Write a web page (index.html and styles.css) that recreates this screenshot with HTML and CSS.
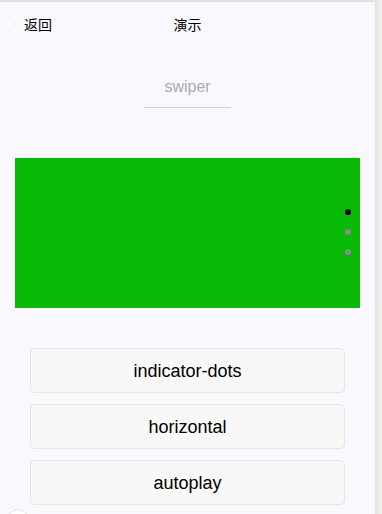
FILE: index.html
```html
<!DOCTYPE html>
<html lang="zh">
<head>
<meta charset="utf-8">
<title>演示</title>
<link rel="stylesheet" href="styles.css">
</head>
<body>
<div class="page">
  <header class="nav">
    <div class="nav-left">
      <svg class="chev" width="10" height="16" viewBox="0 0 10 16"><polyline points="8,1.5 2,8 8,14.5" fill="none" stroke="#ffffff" stroke-width="1.4"/></svg>
      <span class="back-text">返回</span>
    </div>
    <div class="nav-title">演示</div>
    <div class="nav-right"></div>
  </header>
  <div class="field">swiper</div>
  <div class="swiper">
    <div class="dots">
      <span class="dot active"></span>
      <span class="dot"></span>
      <span class="dot"></span>
    </div>
  </div>
  <div class="buttons">
    <button class="btn">indicator-dots</button>
    <button class="btn">horizontal</button>
    <button class="btn">autoplay</button>
  </div>
  <div class="fab"></div>
</div>
</body>
</html>
```
FILE: styles.css
```css
html, body {
  margin: 0;
  padding: 0;
}
body {
  background: linear-gradient(to right, #e2e2e2 375px, #e6e6e6 377px, #efefef 382px);
  font-family: "Liberation Sans", Arial, "Noto Sans CJK SC", sans-serif;
  overflow: hidden;
}
.page {
  position: relative;
  width: 375px;
  height: 512px;
  margin-top: 2px;
  background: #f9f8fe;
  overflow: hidden;
}
.nav {
  display: grid;
  grid-template-columns: 1fr auto 1fr;
  align-items: center;
  height: 43px;
}
.nav-left {
  display: flex;
  align-items: center;
  padding-left: 7px;
  gap: 7px;
}
.chev {
  display: block;
}
.back-text, .nav-title {
  font-family: "Noto Sans CJK SC", sans-serif;
  font-size: 14px;
  color: #000;
  line-height: 20px;
}
.field {
  width: 87px;
  margin: 31px auto 0;
  height: 22px;
  line-height: 22px;
  padding-bottom: 9px;
  border-bottom: 1px solid #cfcfd3;
  text-align: center;
  font-size: 16px;
  color: #acacac;
}
.swiper {
  position: relative;
  margin: 50px 15px 0;
  height: 150px;
  background: #09bb07;
}
.dots {
  position: absolute;
  right: 9px;
  top: 51px;
  display: flex;
  flex-direction: column;
  gap: 14px;
}
.dot {
  display: block;
  width: 6px;
  height: 6px;
  border-radius: 50%;
  background: #8b8892;
}
.dot.active {
  background: #000;
}
.buttons {
  display: flex;
  flex-direction: column;
  gap: 11px;
  margin: 40px 30px 0;
}
.btn {
  height: 45px;
  background: #f8f8f8;
  border: 1px solid #e6e6e6;
  border-radius: 5px;
  font-family: "Liberation Sans", Arial, sans-serif;
  font-size: 18px;
  color: #000;
  padding: 2px 0 0;
}
.fab {
  position: absolute;
  left: 7px;
  top: 507px;
  width: 20px;
  height: 20px;
  border-radius: 50%;
  background: #fff;
  border: 1px solid #e0e0e0;
}
```
